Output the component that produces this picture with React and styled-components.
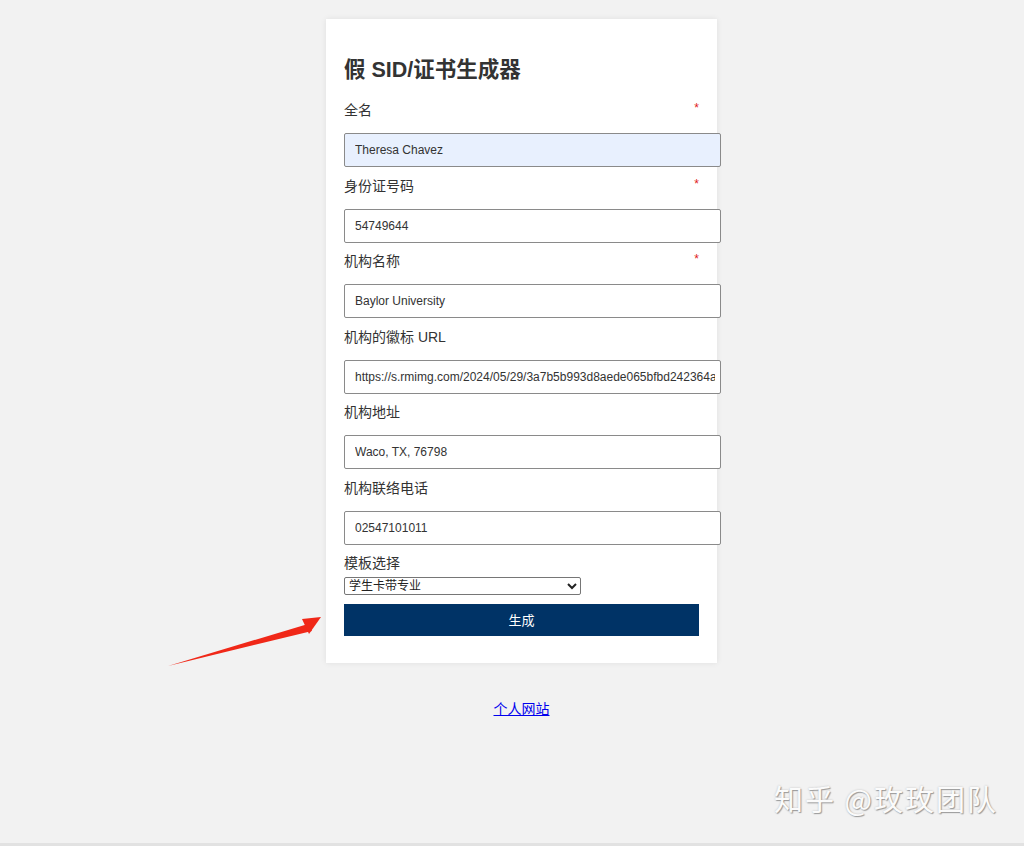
import styled, { createGlobalStyle } from 'styled-components'

const GlobalStyle = createGlobalStyle`
    html, body {
        margin: 0;
        padding: 0;
        background-color: #f2f2f2;
    }
    body {
        font-family: 'Liberation Sans', 'Noto Sans CJK SC', sans-serif;
        color: #333;
    }
`

const fields = [
    { label: '全名', value: 'Theresa Chavez', required: true, filled: true },
    { label: '身份证号码', value: '54749644', required: true },
    { label: '机构名称', value: 'Baylor University', required: true },
    { label: '机构的徽标 URL', value: 'https://s.rmimg.com/2024/05/29/3a7b5b993d8aede065bfbd242364a6c1.png' },
    { label: '机构地址', value: 'Waco, TX, 76798' },
    { label: '机构联络电话', value: '02547101011' },
]

const Arrow = () => (
    <ArrowSvg width="170" height="60" viewBox="0 0 170 60">
        <path d="M0 52 L140 10 L144 17 Z" fill="#f02818" />
        <path d="M134 5 L153 3 L141 20 Z" fill="#f02818" />
    </ArrowSvg>
)

export default function App() {
    return (
        <Page>
            <GlobalStyle />
            <Card>
                <Title>假 SID/证书生成器</Title>
                {fields.map(f => (
                    <Field key={f.label}>
                        <LabelRow>
                            <span>{f.label}</span>
                            {f.required && <Star>*</Star>}
                        </LabelRow>
                        <TextInput defaultValue={f.value} $filled={f.filled} />
                    </Field>
                ))}
                <Field>
                    <LabelRow>模板选择</LabelRow>
                    <Select defaultValue="pro">
                        <option value="pro">学生卡带专业</option>
                        <option value="basic">学生卡</option>
                        <option value="cert">证书</option>
                    </Select>
                </Field>
                <Button>生成</Button>
            </Card>
            <LinkRow>
                <a href="#">个人网站</a>
            </LinkRow>
            <Arrow />
            <Watermark>知乎 @玫玫团队</Watermark>
        </Page>
    )
}

const Page = styled.div`
    position: relative;
    box-sizing: border-box;
    height: 846px;
    padding: 19px 0 0 19px;
    border-bottom: 3px solid #e2e2e2;
    overflow: hidden;
`
const Card = styled.div`
    width: 355px;
    margin: 0 auto;
    padding: 18px 18px 27px;
    background-color: #fff;
    box-shadow: 0 0 6px rgba(0, 0, 0, 0.08);
`
const Title = styled.h2`
    margin: 18px 0 15px;
    font-size: 21.5px;
    line-height: 30px;
    font-weight: bold;
    color: #333;
`
const Field = styled.div`
    margin-bottom: 8.5px;
`
const LabelRow = styled.label`
    display: flex;
    justify-content: space-between;
    font-size: 14px;
    line-height: 20px;
    color: #333;
`
const Star = styled.span`
    color: #e02020;
    font-size: 12px;
    line-height: 12px;
    margin-top: 2px;
`
const TextInput = styled.input`
    display: block;
    width: calc(100% + 5px);
    height: 32px;
    margin-top: 13px;
    padding: 0 5px 0 10px;
    border: 1px solid #8a8a8a;
    border-radius: 2px;
    background-color: ${p => (p.$filled ? '#e8f0fe' : '#fff')};
    font-family: 'Liberation Sans', sans-serif;
    font-size: 12px;
    color: #333;
    outline: none;
`
const Select = styled.select`
    display: block;
    width: 237px;
    margin-top: 4px;
    padding: 0;
    font-family: 'Liberation Sans', 'Noto Sans CJK SC', sans-serif;
    font-size: 12px;
    color: #222;
    border: 1px solid #767676;
    border-radius: 2px;
    background-color: #fff;
`
const Button = styled.button`
    display: block;
    width: 100%;
    height: 32px;
    margin-top: 8px;
    border: none;
    background-color: #003366;
    color: #fff;
    font-family: 'Noto Sans CJK SC', sans-serif;
    font-size: 13px;
    cursor: pointer;
`
const LinkRow = styled.div`
    margin-top: 36px;
    text-align: center;
    font-size: 14px;
    line-height: 18px;
    a {
        color: #0000ee;
        font-family: 'Noto Sans CJK SC', sans-serif;
    }
`
const ArrowSvg = styled.svg`
    position: absolute;
    left: 168px;
    top: 614px;
`
const Watermark = styled.div`
    position: absolute;
    right: 26px;
    bottom: 24px;
    font-family: 'Noto Sans CJK SC', sans-serif;
    font-size: 29px;
    color: #fbfbfb;
    text-shadow: 1px 1px 1px #9a9a9a, 0 0 2px #bdbdbd;
    letter-spacing: 2px;
`
